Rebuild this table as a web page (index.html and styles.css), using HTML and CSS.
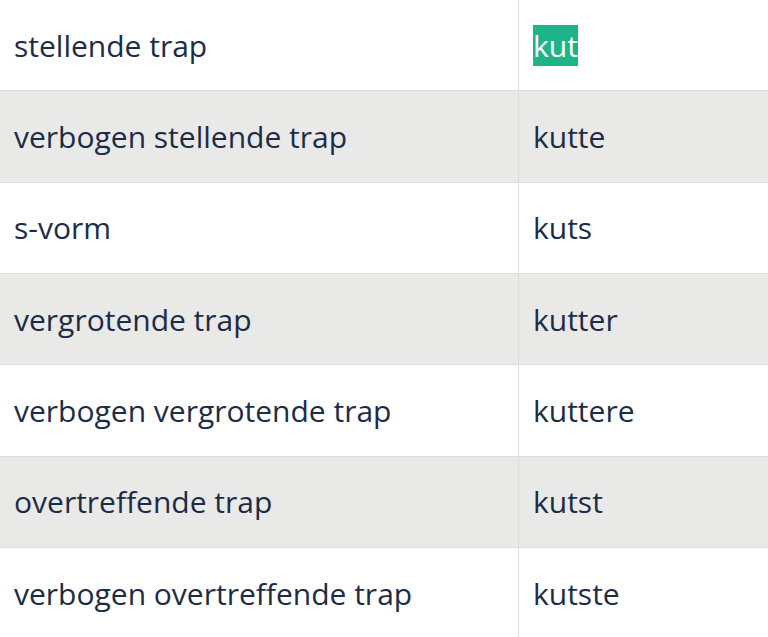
FILE: index.html
```html
<!DOCTYPE html>
<html lang="nl">
<head>
<meta charset="utf-8">
<link rel="stylesheet" href="styles.css">
</head>
<body>
<div class="table">
  <div class="row"><div class="cell label">stellende trap</div><div class="cell value"><span class="hl">kut</span></div></div>
  <div class="row alt"><div class="cell label">verbogen stellende trap</div><div class="cell value">kutte</div></div>
  <div class="row"><div class="cell label">s-vorm</div><div class="cell value">kuts</div></div>
  <div class="row alt"><div class="cell label">vergrotende trap</div><div class="cell value">kutter</div></div>
  <div class="row"><div class="cell label">verbogen vergrotende trap</div><div class="cell value">kuttere</div></div>
  <div class="row alt"><div class="cell label">overtreffende trap</div><div class="cell value">kutst</div></div>
  <div class="row"><div class="cell label">verbogen overtreffende trap</div><div class="cell value">kutste</div></div>
</div>
</body>
</html>
```
FILE: styles.css
```css
html, body {
  margin: 0;
  padding: 0;
  background: #ffffff;
}
body {
  font-family: "Open Sans", "Noto Sans", sans-serif;
  font-size: 30px;
  color: #1c2c47;
  overflow: hidden;
}
.table {
  display: flex;
  flex-direction: column;
}
.row {
  display: grid;
  grid-template-columns: 519px 1fr;
  height: 91.33px;
  box-sizing: border-box;
  border-bottom: 1px solid #dcdcdc;
  background: #ffffff;
}
.row.alt {
  background: #e9e9e8;
}
.cell {
  display: flex;
  align-items: center;
}
.label {
  padding-left: 14px;
  border-right: 1px solid #dcdcdc;
}
.value {
  padding-left: 14px;
}
.hl {
  background: #1db588;
  color: #ffffff;
}
```
